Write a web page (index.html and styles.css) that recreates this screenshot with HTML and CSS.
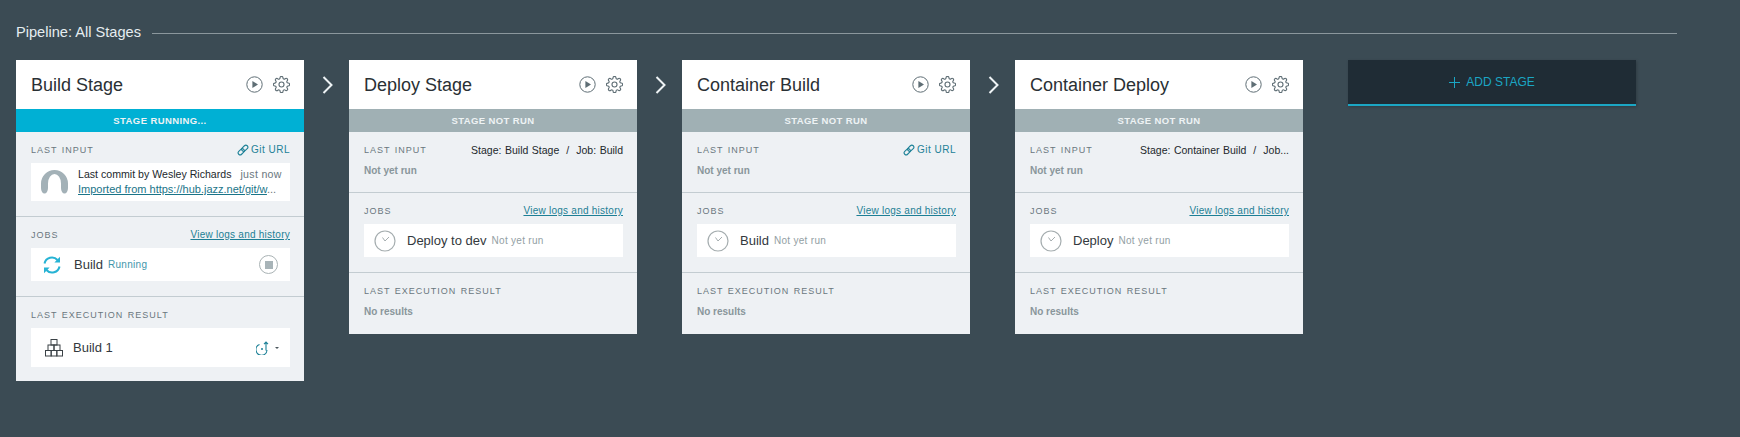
FILE: index.html
```html
<!DOCTYPE html>
<html lang="en">
<head>
    <meta charset="UTF-8">
    <meta name="viewport" content="width=device-width, initial-scale=1.0">
    <title>Pipeline: All Stages</title>
    <link rel="stylesheet" href="styles.css">
</head>
<body>

    <svg class="icon-defs" aria-hidden="true">
        <symbol id="i-play" viewBox="0 0 17 17">
            <circle cx="8.5" cy="8.5" r="7.7" fill="none" stroke="currentColor" stroke-width="1"/>
            <path d="M6.4 4.9 12 8.5 6.4 12.1z" fill="currentColor"/>
        </symbol>
        <symbol id="i-gear" viewBox="0.5 0.5 23 23">
            <g fill="none" stroke="currentColor" stroke-width="1.5">
                <circle cx="12" cy="12" r="3.4"/>
                <path d="M19.4 15a1.65 1.65 0 0 0 .33 1.82l.06.06a2 2 0 0 1 0 2.83 2 2 0 0 1-2.83 0l-.06-.06a1.65 1.65 0 0 0-1.82-.33 1.65 1.65 0 0 0-1 1.51V21a2 2 0 0 1-2 2 2 2 0 0 1-2-2v-.09A1.65 1.65 0 0 0 9 19.4a1.65 1.65 0 0 0-1.82.33l-.06.06a2 2 0 0 1-2.83 0 2 2 0 0 1 0-2.83l.06-.06a1.65 1.65 0 0 0 .33-1.82 1.65 1.65 0 0 0-1.51-1H3a2 2 0 0 1-2-2 2 2 0 0 1 2-2h.09A1.65 1.65 0 0 0 4.6 9a1.65 1.65 0 0 0-.33-1.82l-.06-.06a2 2 0 0 1 0-2.83 2 2 0 0 1 2.83 0l.06.06a1.65 1.65 0 0 0 1.82.33H9a1.65 1.65 0 0 0 1-1.51V3a2 2 0 0 1 2-2 2 2 0 0 1 2 2v.09a1.65 1.65 0 0 0 1 1.51 1.65 1.65 0 0 0 1.82-.33l.06-.06a2 2 0 0 1 2.83 0 2 2 0 0 1 0 2.83l-.06.06a1.65 1.65 0 0 0-.33 1.82V9a1.65 1.65 0 0 0 1.51 1H21a2 2 0 0 1 2 2 2 2 0 0 1-2 2h-.09a1.65 1.65 0 0 0-1.51 1z"/>
            </g>
        </symbol>
        <symbol id="i-clock" viewBox="0 0 22 22">
            <g fill="none" stroke="currentColor">
                <circle cx="11" cy="11" r="10" stroke-width="1.2"/>
                <path d="M8.500 7.500 11 11 15 7" stroke-width="1"/>
            </g>
        </symbol>
        <symbol id="i-link" viewBox="0 0 12 12">
            <g fill="none" stroke="currentColor" stroke-width="1.1" transform="rotate(-45 6 6)">
                <rect x="0" y="4" width="7" height="4" rx="2"/>
                <rect x="5" y="4" width="7" height="4" rx="2"/>
            </g>
        </symbol>
    </svg>

    <header class="page-title">
        <h1>Pipeline: All Stages</h1>
        <span class="title-rule"></span>
    </header>

    <main class="pipeline">

        <section class="stage">
            <div class="stage-head">
                <h2>Build Stage</h2>
                <svg class="tool"><use href="#i-play"/></svg>
                <svg class="tool"><use href="#i-gear"/></svg>
            </div>
            <div class="status status-running">STAGE RUNNING...</div>
            <div class="block">
                <div class="block-head">
                    <span class="label">LAST INPUT</span>
                    <span class="git-url"><svg class="link-icon"><use href="#i-link"/></svg>Git URL</span>
                </div>
                <div class="panel commit">
                    <svg class="avatar" viewBox="0 0 27 24">
                        <path d="M0 13.500A13.500 13.500 0 0 1 27 13.500V18A3.500 5.500 0 0 1 20 18V13.500A6.500 9.500 0 0 0 7 13.500V18A3.500 5.500 0 0 1 0 18Z" fill="currentColor"/>
                    </svg>
                    <div class="commit-text">
                        <div class="commit-line"><span>Last commit by Wesley Richards</span><span class="when">just now</span></div>
                        <div class="commit-msg"><a href="#">Imported from https://hub.jazz.net/git/w</a>...</div>
                    </div>
                </div>
            </div>
            <div class="block">
                <div class="block-head">
                    <span class="label">JOBS</span>
                    <a class="logs" href="#">View logs and history</a>
                </div>
                <div class="panel job job-running">
                    <svg class="job-icon refresh" viewBox="0 0 20 18">
                        <g fill="none" stroke="currentColor" stroke-width="2">
                            <path d="M2.500 7.500A7.500 7.500 0 0 1 15.500 4"/>
                            <path d="M17.500 10.500A7.500 7.500 0 0 1 4.500 14"/>
                        </g>
                        <path d="M18 .8V6.600H12.400zM2 17.200V11.400H7.600z" fill="currentColor"/>
                    </svg>
                    <span class="job-name">Build</span>
                    <span class="job-state state-running">Running</span>
                    <span class="stop"><i></i></span>
                </div>
            </div>
            <div class="block">
                <div class="block-head">
                    <span class="label">LAST EXECUTION RESULT</span>
                </div>
                <div class="panel result">
                    <svg class="blocks" viewBox="0 0 18 18">
                        <g fill="none" stroke="currentColor">
                            <rect x="6" y=".5" width="6" height="5.500"/>
                            <rect x="3" y="6" width="6" height="5.500"/>
                            <rect x="9" y="6" width="6" height="5.500"/>
                            <rect x=".5" y="11.500" width="5.670" height="5.500"/>
                            <rect x="6.170" y="11.500" width="5.670" height="5.500"/>
                            <rect x="11.830" y="11.500" width="5.670" height="5.500"/>
                        </g>
                    </svg>
                    <span class="result-name">Build 1</span>
                    <svg class="redeploy" viewBox="0 0 14 14">
                        <path d="M3.500 3.600A5.500 5.500 0 1 0 11 9M10 9.500V1M8 3.200 10 1 12 3.200" fill="none" stroke="currentColor" stroke-width="1.100"/>
                        <circle cx="6" cy="8" r="1" fill="currentColor"/>
                    </svg>
                    <span class="caret"></span>
                </div>
            </div>
        </section>

        <div class="arrow">
            <svg viewBox="0 0 11 18"><path d="M1.500 1 9.500 9 1.500 17" fill="none" stroke="currentColor" stroke-width="2"/></svg>
        </div>

        <section class="stage">
            <div class="stage-head">
                <h2>Deploy Stage</h2>
                <svg class="tool"><use href="#i-play"/></svg>
                <svg class="tool"><use href="#i-gear"/></svg>
            </div>
            <div class="status">STAGE NOT RUN</div>
            <div class="block">
                <div class="block-head">
                    <span class="label">LAST INPUT</span>
                    <span class="source">Stage: Build Stage &nbsp;/&nbsp; Job: Build</span>
                </div>
                <div class="empty">Not yet run</div>
            </div>
            <div class="block">
                <div class="block-head">
                    <span class="label">JOBS</span>
                    <a class="logs" href="#">View logs and history</a>
                </div>
                <div class="panel job">
                    <svg class="job-icon clock"><use href="#i-clock"/></svg>
                    <span class="job-name">Deploy to dev</span>
                    <span class="job-state">Not yet run</span>
                </div>
            </div>
            <div class="block">
                <div class="block-head">
                    <span class="label">LAST EXECUTION RESULT</span>
                </div>
                <div class="empty empty-last">No results</div>
            </div>
        </section>

        <div class="arrow">
            <svg viewBox="0 0 11 18"><path d="M1.500 1 9.500 9 1.500 17" fill="none" stroke="currentColor" stroke-width="2"/></svg>
        </div>

        <section class="stage">
            <div class="stage-head">
                <h2>Container Build</h2>
                <svg class="tool"><use href="#i-play"/></svg>
                <svg class="tool"><use href="#i-gear"/></svg>
            </div>
            <div class="status">STAGE NOT RUN</div>
            <div class="block">
                <div class="block-head">
                    <span class="label">LAST INPUT</span>
                    <span class="git-url"><svg class="link-icon"><use href="#i-link"/></svg>Git URL</span>
                </div>
                <div class="empty">Not yet run</div>
            </div>
            <div class="block">
                <div class="block-head">
                    <span class="label">JOBS</span>
                    <a class="logs" href="#">View logs and history</a>
                </div>
                <div class="panel job">
                    <svg class="job-icon clock"><use href="#i-clock"/></svg>
                    <span class="job-name">Build</span>
                    <span class="job-state">Not yet run</span>
                </div>
            </div>
            <div class="block">
                <div class="block-head">
                    <span class="label">LAST EXECUTION RESULT</span>
                </div>
                <div class="empty empty-last">No results</div>
            </div>
        </section>

        <div class="arrow">
            <svg viewBox="0 0 11 18"><path d="M1.500 1 9.500 9 1.500 17" fill="none" stroke="currentColor" stroke-width="2"/></svg>
        </div>

        <section class="stage">
            <div class="stage-head">
                <h2>Container Deploy</h2>
                <svg class="tool"><use href="#i-play"/></svg>
                <svg class="tool"><use href="#i-gear"/></svg>
            </div>
            <div class="status">STAGE NOT RUN</div>
            <div class="block">
                <div class="block-head">
                    <span class="label">LAST INPUT</span>
                    <span class="source">Stage: Container Build &nbsp;/&nbsp; Job...</span>
                </div>
                <div class="empty">Not yet run</div>
            </div>
            <div class="block">
                <div class="block-head">
                    <span class="label">JOBS</span>
                    <a class="logs" href="#">View logs and history</a>
                </div>
                <div class="panel job">
                    <svg class="job-icon clock"><use href="#i-clock"/></svg>
                    <span class="job-name">Deploy</span>
                    <span class="job-state">Not yet run</span>
                </div>
            </div>
            <div class="block">
                <div class="block-head">
                    <span class="label">LAST EXECUTION RESULT</span>
                </div>
                <div class="empty empty-last">No results</div>
            </div>
        </section>

        <button class="add-stage" type="button"><span class="plus"></span>ADD STAGE</button>

    </main>

</body>
</html>
```

FILE: styles.css
```css
body {
    font-family: "Liberation Sans", Arial, sans-serif;
    background-color: #3b4b54;
    margin: 0;
    height: 437px;
    overflow: hidden;
}

a {
    color: inherit;
}

.icon-defs {
    display: none;
}

.page-title {
    display: flex;
    align-items: center;
    padding: 22px 63px 0 16px;
    height: 20px;
}

.page-title h1 {
    margin: 0;
    font-size: 14.6px;
    font-weight: normal;
    color: #e6edf0;
}

.title-rule {
    flex: 1;
    height: 1px;
    margin: 2px 0 0 11px;
    background-color: #8b979d;
}

.pipeline {
    display: flex;
    align-items: flex-start;
    margin-top: 18px;
    padding-left: 16px;
}

.stage {
    width: 288px;
    background-color: #eef1f4;
}

.stage-head {
    display: flex;
    align-items: center;
    gap: 10px;
    height: 49px;
    padding: 0 14px 0 15px;
    background-color: #fff;
}

.stage-head h2 {
    flex: 1;
    margin: 0;
    padding-top: 1px;
    font-size: 18px;
    font-weight: normal;
    color: #2a3034;
}

.tool {
    width: 17px;
    height: 17px;
    color: #5f6e75;
}

.status {
    height: 23px;
    line-height: 23px;
    text-align: center;
    font-size: 9.5px;
    font-weight: bold;
    letter-spacing: 0.4px;
    color: #eef3f4;
    background-color: #a0b0b4;
}

.status-running {
    background-color: #00b0d4;
}

.block {
    padding: 11px 14px 15px 15px;
    border-bottom: 1px solid #c3ccd1;
}

.block:last-child {
    padding-bottom: 14px;
    border-bottom: none;
}

.block-head {
    display: flex;
    justify-content: space-between;
    height: 14px;
    line-height: 14px;
    margin-bottom: 6px;
}

.label {
    font-size: 9px;
    letter-spacing: 1px;
    word-spacing: 1px;
    color: #6a777e;
}

.git-url {
    display: flex;
    align-items: center;
    gap: 2px;
    font-size: 10px;
    letter-spacing: 0.5px;
    color: #1d8197;
}

.link-icon {
    width: 12px;
    height: 12px;
}

.logs {
    font-size: 10px;
    letter-spacing: 0.25px;
    color: #1d7f95;
}

.source {
    font-size: 10.5px;
    word-spacing: 0.6px;
    color: #22282c;
}

.panel {
    display: flex;
    align-items: center;
    background-color: #fff;
}

.empty {
    padding-top: 1px;
    margin-bottom: -1px;
    font-size: 10px;
    font-weight: bold;
    line-height: 14px;
    color: #89969b;
}

.empty-last {
    padding-bottom: 2px;
}

.commit {
    height: 38px;
    padding-left: 10px;
}

.avatar {
    flex: none;
    width: 27px;
    height: 24px;
    margin-right: 10px;
    color: #a3b1b7;
}

.commit-text {
    flex: 1;
    min-width: 0;
    font-size: 11px;
    line-height: 15px;
    color: #22282c;
}

.commit-line {
    display: flex;
    gap: 9px;
    font-size: 10.6px;
}

.when {
    letter-spacing: 0.3px;
    color: #6a777e;
}

.commit-msg {
    color: #6a777e;
}

.commit-msg a {
    color: #1a7488;
}

.job {
    height: 33px;
    padding-left: 10px;
}

.job-icon {
    flex: none;
    width: 22px;
    height: 22px;
    margin-right: 11px;
}

.clock {
    color: #a5adaf;
}

.refresh {
    width: 20px;
    height: 18px;
    margin: 0 12px 0 1px;
    color: #27b3d4;
}

.job-name {
    font-size: 13px;
    color: #33393d;
}

.job-state {
    margin-left: 5px;
    font-size: 10px;
    letter-spacing: 0.3px;
    color: #93a0a4;
}

.state-running {
    color: #3f96ab;
}

.stop {
    display: flex;
    align-items: center;
    justify-content: center;
    width: 17px;
    height: 17px;
    margin: 0 12px 0 auto;
    border: 1px solid #aab3b5;
    border-radius: 50%;
}

.stop i {
    width: 8px;
    height: 8px;
    background-color: #a8b4b8;
}

.result {
    height: 39px;
    padding-left: 14px;
}

.blocks {
    flex: none;
    width: 18px;
    height: 18px;
    margin-right: 10px;
    color: #3a4145;
}

.result-name {
    flex: 1;
    font-size: 13px;
    color: #33393d;
}

.redeploy {
    width: 14px;
    height: 14px;
    color: #1d8197;
}

.caret {
    margin: 0 11px 0 5px;
    border: 2px solid transparent;
    border-top-color: #4b565c;
    border-bottom: none;
}

.arrow {
    display: flex;
    align-items: center;
    flex: none;
    width: 45px;
    height: 49px;
    padding-left: 18px;
    box-sizing: border-box;
    color: #eef3f5;
}

.arrow svg {
    width: 11px;
    height: 18px;
}

.add-stage {
    display: flex;
    align-items: center;
    justify-content: center;
    gap: 6px;
    width: 288px;
    height: 46px;
    margin-left: 45px;
    padding: 0;
    border: none;
    border-bottom: 2px solid #1ba6c4;
    font-family: inherit;
    font-size: 12px;
    color: #1ba6c4;
    background-color: #1f2c35;
    box-shadow: 1px 1px 3px rgba(0, 0, 0, 0.2);
}

.plus {
    width: 11px;
    height: 11px;
    background:
        linear-gradient(currentColor, currentColor) center / 100% 1px no-repeat,
        linear-gradient(currentColor, currentColor) center / 1px 100% no-repeat;
}
```
